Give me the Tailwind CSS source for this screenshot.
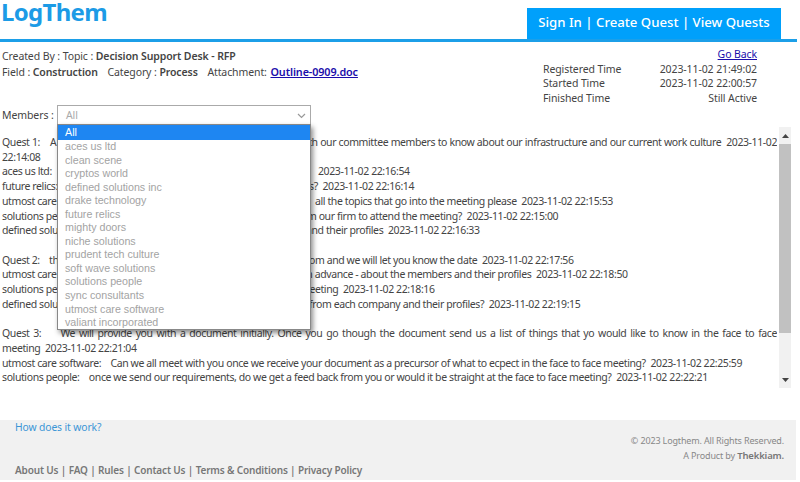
<!DOCTYPE html>
<html lang="en">
<head>
    <meta charset="UTF-8">
    <title>LogThem</title>
    <script src="https://cdn.jsdelivr.net/npm/@tailwindcss/browser@4"></script>
</head>
<body class="bg-white h-[482px] w-[800px] overflow-hidden font-['Noto_Sans',sans-serif] text-[10.5px] tracking-[-0.1px] leading-[14.7px] text-[#444]">

    <!-- Header -->
    <header class="flex justify-between items-end h-[42px] mr-[3px] border-b-[3px] border-[#1c9fe8]">
        <a class="self-start pl-[1px] -mt-[8px] text-[24px] tracking-[-0.7px] leading-[40px] font-bold text-[#1c9be6]">LogThem</a>
        <nav class="flex items-center justify-center w-[254px] h-[31px] pb-[2px] mr-[16px] bg-[#00a0fb] text-white text-[13.2px] tracking-normal font-medium">
            Sign In&nbsp;| Create Quest&nbsp;| View Quests
        </nav>
    </header>

    <!-- Quest details -->
    <section class="flex justify-between h-[60px] pl-[2px] pr-[43px] pt-[5px]">
        <div class="pt-[2px]">
            <p>Created By : Topic : <b class="font-semibold">Decision Support Desk - RFP</b></p>
            <p class="mt-px">Field : <b class="font-semibold">Construction</b> <span class="ml-[7px]">Category :</span> <b class="font-semibold">Process</b> <span class="ml-[7px]">Attachment:</span> <a href="#" class="ml-[1px] font-semibold text-[10.8px] text-[#1a0dab] underline">Outline-0909.doc</a></p>
        </div>
        <div class="w-[214px]">
            <p class="text-right"><a href="#" class="text-[#1a0dab] underline">Go Back</a></p>
            <p class="flex justify-between"><span>Registered Time</span><span>2023-11-02 21:49:02</span></p>
            <p class="flex justify-between"><span>Started Time</span><span>2023-11-02 22:00:57</span></p>
            <p class="flex justify-between"><span>Finished Time</span><span>Still Active</span></p>
        </div>
    </section>

    <!-- Members filter -->
    <div class="relative flex items-center h-[21px] mt-[3px] pl-[2px]">
        <span class="w-[55px] whitespace-nowrap">Members :</span>
        <div class="flex items-center justify-between w-[254px] h-[21px] pl-[8px] pr-[4px] border border-[#aaa] text-[#aaa] bg-white">
            <span>All</span>
            <svg width="9" height="6" viewBox="0 0 9 6" fill="none" stroke="#999" stroke-width="1.2"><path d="M1 1l3.5 3.5L8 1"/></svg>
        </div>
        <ul class="absolute z-10 left-[57px] top-[19px] w-[254px] h-[206px] bg-white border border-[#888] shadow-[2px_3px_5px_rgba(0,0,0,0.45)] font-['Liberation_Sans',sans-serif] text-[10.7px] tracking-normal leading-[13.55px] text-[#a3a3a3]">
            <li class="h-[15px] leading-[15px] pl-[7px] bg-[#1e86f2] text-white">All</li>
            <li class="pl-[7px]">aces us ltd</li>
            <li class="pl-[7px]">clean scene</li>
            <li class="pl-[7px]">cryptos world</li>
            <li class="pl-[7px]">defined solutions inc</li>
            <li class="pl-[7px]">drake technology</li>
            <li class="pl-[7px]">future relics</li>
            <li class="pl-[7px]">mighty doors</li>
            <li class="pl-[7px]">niche solutions</li>
            <li class="pl-[7px]">prudent tech culture</li>
            <li class="pl-[7px]">soft wave solutions</li>
            <li class="pl-[7px]">solutions people</li>
            <li class="pl-[7px]">sync consultants</li>
            <li class="pl-[7px]">utmost care software</li>
            <li class="pl-[7px]">valiant incorporated</li>
        </ul>
    </div>

    <!-- Thread -->
    <main class="flex h-[261px] mt-[1px]">
        <div class="w-[777px] pl-[2px] pt-[8px] overflow-hidden tracking-[-0.4px]">
            <p class="text-justify [text-align-last:justify]">Quest 1: &nbsp; &nbsp;A face to face meeting will be arranged for all vendors with our committee members to know about our infrastructure and our current work culture &nbsp;2023-11-02</p>
            <p>22:14:08</p>
            <p class="flex"><span class="w-[316px]">aces us ltd:</span><span>2023-11-02 22:16:54</span></p>
            <p class="flex"><span class="w-[307px]">future relics:</span><span>s? &nbsp;2023-11-02 22:16:14</span></p>
            <p class="flex"><span class="w-[313px]">utmost care software:</span><span>all the topics that go into the meeting please &nbsp;2023-11-02 22:15:53</span></p>
            <p class="flex"><span class="w-[292px]">solutions people:</span><span>from our firm to attend the meeting? &nbsp;2023-11-02 22:15:00</span></p>
            <p class="flex mb-[14.7px]"><span class="w-[304px]">defined solutions inc:</span><span>and their profiles &nbsp;2023-11-02 22:16:33</span></p>

            <p class="flex"><span class="w-[300px]">Quest 2: &nbsp; &nbsp;the</span><span>from and we will let you know the date &nbsp;2023-11-02 22:17:56</span></p>
            <p class="flex"><span class="w-[302px]">utmost care software:</span><span>in advance - about the members and their profiles &nbsp;2023-11-02 22:18:50</span></p>
            <p class="flex"><span class="w-[298px]">solutions people:</span><span>meeting &nbsp;2023-11-02 22:18:16</span></p>
            <p class="flex mb-[14.7px]"><span class="w-[307px]">defined solutions inc:</span><span>from each company and their profiles? &nbsp;2023-11-02 22:19:15</span></p>

            <p class="text-justify [text-align-last:justify]">Quest 3: &nbsp; &nbsp; We will provide you with a document initially. Once you go though the document send us a list of things that yo would like to know in the face to face</p>
            <p>meeting &nbsp;2023-11-02 22:21:04</p>
            <p>utmost care software: &nbsp; &nbsp;Can we all meet with you once we receive your document as a precursor of what to ecpect in the face to face meeting? &nbsp;2023-11-02 22:25:59</p>
            <p>solutions people: &nbsp; &nbsp;once we send our requirements, do we get a feed back from you or would it be straight at the face to face meeting? &nbsp;2023-11-02 22:22:21</p>
        </div>
        <!-- Scrollbar -->
        <div class="flex flex-col w-[12px] ml-[2px] bg-[#f1f1f1]">
            <div class="flex justify-center items-center h-[17px]"><svg width="7" height="4" viewBox="0 0 7 4" fill="#444"><path d="M3.5 0L7 4H0z"/></svg></div>
            <div class="h-[189px] bg-[#c1c1c1]"></div>
            <div class="flex-1"></div>
            <div class="flex justify-center items-center h-[16px]"><svg width="7" height="4" viewBox="0 0 7 4" fill="#444"><path d="M0 0h7L3.5 4z"/></svg></div>
        </div>
    </main>

    <!-- Footer -->
    <footer class="flex justify-between h-[60px] mt-[32px] mr-[4px] pl-[15px] pr-[12px] bg-[#f1f1f1] text-[#777]">
        <div class="flex flex-col justify-between pb-[2px]">
            <a href="#" class="text-[10.3px] text-[#3b95d6]">How does it work?</a>
            <p class="font-semibold text-[10px] tracking-[-0.15px]">About Us | FAQ | Rules | Contact Us | Terms &amp; Conditions | Privacy Policy</p>
        </div>
        <div class="pt-[14px] text-right text-[9px] tracking-[-0.15px] text-[#888]">
            <p>© 2023 Logthem. All Rights Reserved.</p>
            <p>A Product by <b class="font-semibold text-[9.5px] text-[#777]">Thekkiam.</b></p>
        </div>
    </footer>
</body>
</html>
